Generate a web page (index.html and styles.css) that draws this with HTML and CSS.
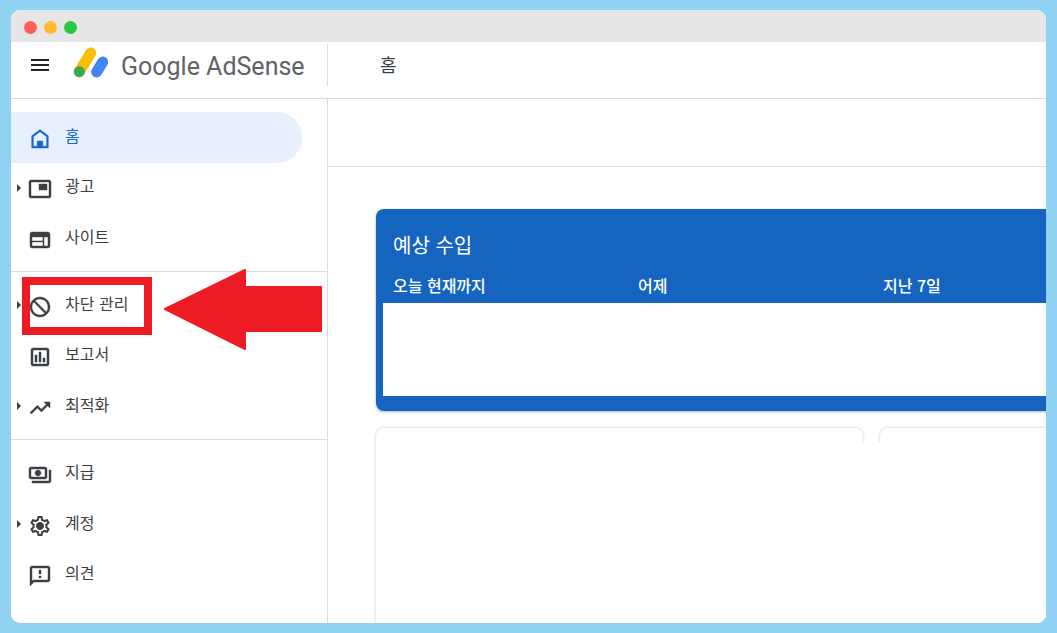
FILE: index.html
```html
<!DOCTYPE html>
<html lang="ko">
<head>
<meta charset="utf-8">
<title>Google AdSense 홈</title>
<link rel="stylesheet" href="styles.css">
</head>
<body>
<div class="window">
  <div class="titlebar">
    <span class="light light-red"></span>
    <span class="light light-yellow"></span>
    <span class="light light-green"></span>
  </div>
  <header class="topbar">
    <div class="brand">
      <svg class="menu-icon" viewBox="0 0 24 24"><path d="M3 18h18v-2H3v2zm0-5h18v-2H3v2zm0-7v2h18V6H3z"/></svg>
      <svg class="logo" width="36" height="40" viewBox="0 0 36 40">
        <line x1="18.7" y1="8" x2="7.3" y2="26.7" stroke="#fbbc04" stroke-width="11" stroke-linecap="round"/>
        <line x1="30.7" y1="17" x2="24.7" y2="27" stroke="#4285f4" stroke-width="11" stroke-linecap="round"/>
        <circle cx="7.3" cy="26.7" r="5.5" fill="#34a853"/>
      </svg>
      <span class="wordmark">Google AdSense</span>
    </div>
    <h1 class="page-title">홈</h1>
  </header>
  <div class="layout">
    <nav class="sidebar">
      <section class="nav-section nav-section-first">
        <a class="nav-row nav-row-active">
          <span class="caret-slot"></span>
          <svg class="nav-icon" viewBox="0 0 24 24"><path fill-rule="evenodd" d="M12 2.6 3.7 8.8V21h16.6V8.8L12 2.6zm6.6 16.7H5.4V9.7L12 4.8l6.6 4.9v9.6z"/><path d="M9.2 14h5.6v6H9.2z"/></svg>
          <span class="nav-label">홈</span>
        </a>
        <a class="nav-row">
          <span class="caret-slot"><i class="caret"></i></span>
          <svg class="nav-icon" viewBox="0 0 24 24"><path d="M19 7h-8v6h8V7zm2-4H3c-1.1 0-2 .9-2 2v14c0 1.1.9 1.98 2 1.98h18c1.1 0 2-.88 2-1.98V5c0-1.1-.9-2-2-2zm0 16.01H3V4.98h18v14.03z"/></svg>
          <span class="nav-label">광고</span>
        </a>
        <a class="nav-row">
          <span class="caret-slot"></span>
          <svg class="nav-icon" viewBox="0 0 24 24"><path d="M20 4H4c-1.1 0-1.99.9-1.99 2L2 18c0 1.1.9 2 2 2h16c1.1 0 2-.9 2-2V6c0-1.1-.9-2-2-2zm-5 14H4v-4h11v4zm0-5H4V9h11v4zm5 5h-4V9h4v9z"/></svg>
          <span class="nav-label">사이트</span>
        </a>
      </section>
      <section class="nav-section">
        <a class="nav-row">
          <span class="caret-slot"><i class="caret"></i></span>
          <svg class="nav-icon" viewBox="0 0 24 24"><path d="M12 2C6.48 2 2 6.48 2 12s4.48 10 10 10 10-4.48 10-10S17.52 2 12 2zM4 12c0-4.42 3.58-8 8-8 1.85 0 3.55.63 4.9 1.69L5.69 16.9C4.63 15.55 4 13.85 4 12zm8 8c-1.85 0-3.55-.63-4.9-1.69L18.31 7.1C19.37 8.45 20 10.15 20 12c0 4.42-3.58 8-8 8z" transform="matrix(-1 0 0 1 24 0)"/></svg>
          <span class="nav-label">차단 관리</span>
        </a>
        <a class="nav-row">
          <span class="caret-slot"></span>
          <svg class="nav-icon" viewBox="0 0 24 24"><path d="M9 17H7v-7h2v7zm4 0h-2V7h2v10zm4 0h-2v-4h2v4zm2 2H5V5h14v14zm0-16H5c-1.1 0-2 .9-2 2v14c0 1.1.9 2 2 2h14c1.1 0 2-.9 2-2V5c0-1.1-.9-2-2-2z"/></svg>
          <span class="nav-label">보고서</span>
        </a>
        <a class="nav-row">
          <span class="caret-slot"><i class="caret"></i></span>
          <svg class="nav-icon" viewBox="0 0 24 24"><path d="M16 6l2.29 2.29-4.88 4.88-4-4L2 16.59 3.41 18l6-6 4 4 6.3-6.29L22 12V6z"/></svg>
          <span class="nav-label">최적화</span>
        </a>
      </section>
      <section class="nav-section nav-section-last">
        <a class="nav-row">
          <span class="caret-slot"></span>
          <svg class="nav-icon" viewBox="0 0 24 24"><path d="M19 14V6c0-1.1-.9-2-2-2H3c-1.1 0-2 .9-2 2v8c0 1.1.9 2 2 2h14c1.1 0 2-.9 2-2zm-2 0H3V6h14v8zm-7-7c-1.66 0-3 1.34-3 3s1.34 3 3 3 3-1.34 3-3-1.34-3-3-3zm13 0v11c0 1.1-.9 2-2 2H4v-2h17V7h2z"/></svg>
          <span class="nav-label">지급</span>
        </a>
        <a class="nav-row">
          <span class="caret-slot"><i class="caret"></i></span>
          <svg class="nav-icon nav-icon-fine" viewBox="0 0 24 24"><path d="M19.43 12.98c.04-.32.07-.64.07-.98 0-.34-.03-.66-.07-.98l2.11-1.65c.19-.15.24-.42.12-.64l-2-3.46c-.09-.16-.26-.25-.44-.25-.06 0-.12.01-.17.03l-2.49 1c-.52-.4-1.08-.73-1.69-.98l-.38-2.65C14.46 2.18 14.25 2 14 2h-4c-.25 0-.46.18-.49.42l-.38 2.65c-.61.25-1.17.59-1.69.98l-2.49-1c-.06-.02-.12-.03-.18-.03-.17 0-.34.09-.43.25l-2 3.46c-.13.22-.07.49.12.64l2.11 1.65c-.04.32-.07.65-.07.98 0 .33.03.66.07.98l-2.11 1.65c-.19.15-.24.42-.12.64l2 3.46c.09.16.26.25.44.25.06 0 .12-.01.17-.03l2.49-1c.52.4 1.08.73 1.69.98l.38 2.65c.03.24.24.42.49.42h4c.25 0 .46-.18.49-.42l.38-2.65c.61-.25 1.17-.59 1.69-.98l2.49 1c.06.02.12.03.18.03.17 0 .34-.09.43-.25l2-3.46c.12-.22.07-.49-.12-.64l-2.11-1.65zm-1.98-1.71c.04.31.05.52.05.73 0 .21-.02.43-.05.73l-.14 1.13.89.7 1.08.84-.7 1.21-1.27-.51-1.04-.42-.9.68c-.43.32-.84.56-1.25.73l-1.06.43-.16 1.13-.2 1.35h-1.4l-.19-1.35-.16-1.13-1.06-.43c-.43-.18-.83-.41-1.23-.71l-.91-.7-1.06.43-1.27.51-.7-1.21 1.08-.84.89-.7-.14-1.13c-.03-.31-.05-.54-.05-.74s.02-.43.05-.73l.14-1.13-.89-.7-1.08-.84.7-1.21 1.27.51 1.04.42.9-.68c.43-.32.84-.56 1.25-.73l1.06-.43.16-1.13.2-1.35h1.39l.19 1.35.16 1.13 1.06.43c.43.18.83.41 1.23.71l.91.7 1.06-.43 1.27-.51.7 1.21-1.07.85-.89.7.14 1.13zM12 8c-2.21 0-4 1.79-4 4s1.79 4 4 4 4-1.79 4-4-1.79-4-4-4z"/></svg>
          <span class="nav-label">계정</span>
        </a>
        <a class="nav-row">
          <span class="caret-slot"></span>
          <svg class="nav-icon" viewBox="0 0 24 24"><path d="M20 2H4c-1.1 0-1.99.9-1.99 2L2 22l4-4h14c1.1 0 2-.9 2-2V4c0-1.1-.9-2-2-2zm0 14H5.17L4 17.17V4h16v12zM11 12h2v2h-2zm0-6h2v4h-2z"/></svg>
          <span class="nav-label">의견</span>
        </a>
      </section>
    </nav>
    <main class="main">
      <div class="toolbar"></div>
      <div class="content">
        <section class="revenue-card">
          <h2 class="revenue-title">예상 수입</h2>
          <div class="revenue-cols">
            <span class="revenue-col">오늘 현재까지</span>
            <span class="revenue-col">어제</span>
            <span class="revenue-col">지난 7일</span>
          </div>
          <div class="revenue-panel"></div>
        </section>
        <div class="card-row">
          <div class="card"></div>
          <div class="card"></div>
        </div>
      </div>
      <div class="content-mask"></div>
    </main>
  </div>
  <div class="highlight-box"></div>
  <svg class="highlight-arrow" width="164" height="85" viewBox="0 0 164 85">
    <path d="M3 42 L83 3 V20 H159 V64 H83 V82 Z" fill="#ed1c24" stroke="#ed1c24" stroke-width="2" stroke-linejoin="round"/>
  </svg>
</div>
</body>
</html>
```
FILE: styles.css
```css
* { box-sizing: border-box; }
html, body { margin: 0; height: 100%; }
body {
  padding: 10px 11px;
  background: #90d2f1;
  overflow: hidden;
  font-family: "Noto Sans CJK KR", "Noto Sans", sans-serif;
}
.window {
  position: relative;
  display: flex;
  flex-direction: column;
  height: 613px;
  background: #fff;
  border-radius: 9px;
  overflow: hidden;
}
.titlebar {
  display: flex;
  align-items: center;
  gap: 7px;
  flex: none;
  height: 32px;
  padding: 2px 0 0 13px;
  background: #e6e6e6;
}
.light { width: 13px; height: 13px; border-radius: 50%; }
.light-red { background: #ff5f57; }
.light-yellow { background: #febc2e; }
.light-green { background: #28c840; }
.topbar {
  display: flex;
  align-items: center;
  flex: none;
  height: 57px;
  border-bottom: 1px solid #dadce0;
}
.brand {
  display: flex;
  align-items: center;
  width: 317px;
  height: 42px;
  margin-bottom: 10px;
  padding-left: 17px;
  border-right: 1px solid #dadce0;
}
.menu-icon { width: 24px; height: 24px; flex: none; fill: #202124; }
.logo { flex: none; margin-left: 20px; }
.wordmark {
  margin: 4px 0 0 13px;
  font-family: Roboto, "Liberation Sans", sans-serif;
  font-size: 25px;
  line-height: 32px;
  color: #5f6368;
  white-space: nowrap;
}
.page-title {
  margin: 0 0 12px 52px;
  font-size: 18px;
  font-weight: 400;
  color: #3c4043;
}
.layout { display: flex; flex: 1; min-height: 0; }
.sidebar {
  flex: none;
  width: 317px;
  border-right: 1px solid #dadce0;
}
.nav-section {
  padding: 8px 0 7.5px;
  border-bottom: 1px solid #dadce0;
}
.nav-section-first { padding-top: 13px; }
.nav-section-last { padding-top: 8.5px; border-bottom: 0; }
.nav-row {
  display: flex;
  align-items: center;
  height: 50.5px;
  width: 291px;
  padding-left: 6px;
  color: #3c4043;
  border-radius: 0 25px 25px 0;
}
.nav-row-active { background: #e8f0fe; color: #1967d2; }
.caret-slot { flex: none; width: 11px; display: flex; }
.caret {
  width: 0;
  height: 0;
  border-left: 4px solid #3c4043;
  border-top: 4px solid transparent;
  border-bottom: 4px solid transparent;
}
.nav-icon {
  flex: none;
  width: 24px;
  height: 24px;
  margin-top: 3px;
  fill: currentColor;
  stroke: currentColor;
  stroke-width: 0.45;
}
.nav-icon-fine { stroke-width: 0; }
.nav-label {
  margin: 0 0 5px 13px;
  font-size: 16px;
  line-height: 20px;
  white-space: nowrap;
}
.main {
  position: relative;
  flex: 1;
  min-width: 0;
  overflow: hidden;
}
.toolbar { height: 68px; border-bottom: 1px solid #dadce0; }
.content { width: 800px; padding: 42px 0 0 48px; }
.revenue-card {
  height: 202px;
  padding-top: 22px;
  background: #1565c0;
  border-radius: 8px 0 0 8px;
  box-shadow: 0 1px 3px rgba(60, 64, 67, .4);
  color: #fff;
}
.revenue-title {
  height: 28px;
  margin: 0 0 0 17px;
  font-size: 20px;
  font-weight: 400;
  line-height: 28px;
}
.revenue-cols {
  display: grid;
  grid-template-columns: repeat(3, 245px);
  height: 44px;
  padding: 15px 0 0 17px;
  font-size: 16px;
  font-weight: 500;
  line-height: 22px;
  white-space: nowrap;
}
.revenue-panel {
  height: 93px;
  margin-left: 7px;
  background: #fff;
}
.card-row { display: flex; gap: 17px; margin-top: 17px; }
.card {
  flex: none;
  width: 487px;
  height: 300px;
  border-radius: 8px;
  background: #fff;
  box-shadow: 0 0 3px rgba(60, 64, 67, .3);
}
.content-mask {
  position: absolute;
  left: 59px;
  top: 343px;
  right: 0;
  bottom: 0;
  background: #fff;
}
.highlight-box {
  position: absolute;
  left: 11px;
  top: 267px;
  width: 130px;
  height: 58px;
  border: 8px solid #ed1c24;
}
.highlight-arrow {
  position: absolute;
  left: 151px;
  top: 257px;
}
```
